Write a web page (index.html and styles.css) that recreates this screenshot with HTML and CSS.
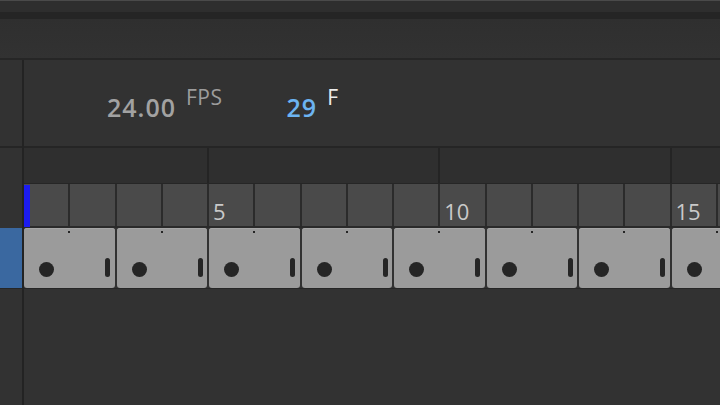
FILE: index.html
```html
<!DOCTYPE html>
<html>
<head>
<meta charset="utf-8">
<link rel="stylesheet" href="styles.css">
</head>
<body>
<div class="topbar">
  <div class="tb-line"></div>
  <div class="tb-strip"></div>
  <div class="tb-band"></div>
  <div class="tb-main"></div>
  <div class="tb-sep"></div>
</div>
<div class="panel">
  <div class="side">
    <div class="side-info"></div>
    <div class="side-ruler"></div>
    <div class="side-layer"></div>
    <div class="side-rest"></div>
  </div>
  <div class="main">
    <div class="info">
      <span class="num">24.00</span><span class="unit">FPS</span>
      <span class="num cur">29</span><span class="unit white">F</span>
    </div>
    <div class="ruler-top">
      <div class="grp first"></div>
      <div class="grp"></div>
      <div class="grp"></div>
      <div class="grp"></div>
    </div>
    <div class="ruler">
      <div class="playhead"></div>
      <div class="cell"></div><div class="cell"></div><div class="cell"></div><div class="cell"></div>
      <div class="cell"><span>5</span></div><div class="cell"></div><div class="cell"></div><div class="cell"></div><div class="cell"></div>
      <div class="cell"><span>10</span></div><div class="cell"></div><div class="cell"></div><div class="cell"></div><div class="cell"></div>
      <div class="cell"><span>15</span></div><div class="cell"></div>
    </div>
    <div class="keys">
      <div class="key"><i class="tick"></i><i class="dot"></i><i class="bar"></i></div>
      <div class="key"><i class="tick"></i><i class="dot"></i><i class="bar"></i></div>
      <div class="key"><i class="tick"></i><i class="dot"></i><i class="bar"></i></div>
      <div class="key"><i class="tick"></i><i class="dot"></i><i class="bar"></i></div>
      <div class="key"><i class="tick"></i><i class="dot"></i><i class="bar"></i></div>
      <div class="key"><i class="tick"></i><i class="dot"></i><i class="bar"></i></div>
      <div class="key"><i class="tick"></i><i class="dot"></i><i class="bar"></i></div>
      <div class="key"><i class="tick"></i><i class="dot"></i><i class="bar"></i></div>
    </div>
    <div class="rest"></div>
  </div>
</div>
</body>
</html>
```
FILE: styles.css
```css
* { box-sizing: border-box; }
html, body { margin: 0; padding: 0; }
body {
  width: 720px;
  height: 405px;
  overflow: hidden;
  background: #323232;
  font-family: "Open Sans", "Liberation Sans", sans-serif;
  display: flex;
  flex-direction: column;
}
.topbar { display: flex; flex-direction: column; flex: none; }
.tb-line { height: 1px; background: #4a4a4a; }
.tb-strip { height: 11px; background: #2e2e2e; }
.tb-band { height: 7px; background: #252525; }
.tb-main { height: 39px; background: linear-gradient(#2f2f2f, #323232); }
.tb-sep { height: 2px; background: #262626; }

.panel { flex: 1; display: flex; min-height: 0; }
.side {
  width: 24px;
  flex: none;
  border-right: 2px solid #232323;
  display: flex;
  flex-direction: column;
}
.side-info { height: 88px; border-bottom: 2px solid #252525; }
.side-ruler { height: 80px; }
.side-layer { height: 60px; background: #3a68a0; }
.side-rest { flex: 1; border-top: 1px solid #262626; }

.main { flex: 1; display: flex; flex-direction: column; overflow: hidden; min-width: 0; }
.info {
  height: 88px;
  border-bottom: 2px solid #252525;
  display: flex;
  align-items: flex-start;
  padding-left: 83px;
}
.num {
  font-size: 25px;
  font-weight: 600;
  letter-spacing: 1px;
  color: #a2a2a2;
  line-height: 1;
  margin-top: 35px;
}
.unit {
  font-size: 21px;
  letter-spacing: 0.5px;
  color: #9c9c9c;
  line-height: 1;
  margin-top: 27px;
  margin-left: 10px;
  margin-right: 64px;
}
.num.cur { color: #6cb4f2; }
.unit.white { color: #ececec; }

.ruler-top {
  height: 36px;
  display: flex;
  background: #2f2f2f;
  border-bottom: 1px solid #262626;
}
.grp { flex: none; width: 231.25px; border-right: 2px solid #242424; }
.grp.first { width: 185px; }

.ruler {
  height: 44px;
  display: flex;
  position: relative;
  border-bottom: 2px solid #2a2a2a;
}
.cell {
  flex: none;
  width: 46.25px;
  background: #4a4a4a;
  border-right: 2px solid #2b2b2b;
  display: flex;
  align-items: flex-end;
  padding: 0 0 4px 4px;
}
.cell span {
  font-size: 22px;
  line-height: 1;
  color: #c9c9c9;
}
.playhead {
  position: absolute;
  left: 0;
  top: 1px;
  width: 6px;
  height: 42px;
  background: #1c1cf0;
}

.keys {
  height: 61px;
  display: flex;
  border-bottom: 1px solid #262626;
}
.key {
  flex: none;
  position: relative;
  width: 90.5px;
  height: 60px;
  margin-right: 2px;
  background: #9b9b9b;
  border-radius: 3px;
  box-shadow: inset 0 1px 0 #a6a6a6;
}
.key i { position: absolute; background: #252525; }
.tick { left: 44px; top: 3px; width: 2px; height: 2px; }
.dot { left: 15px; top: 34px; width: 15px; height: 15px; border-radius: 50%; }
.bar { left: 81px; top: 30px; width: 5px; height: 19px; border-radius: 3px; }
.rest { flex: 1; }
```
